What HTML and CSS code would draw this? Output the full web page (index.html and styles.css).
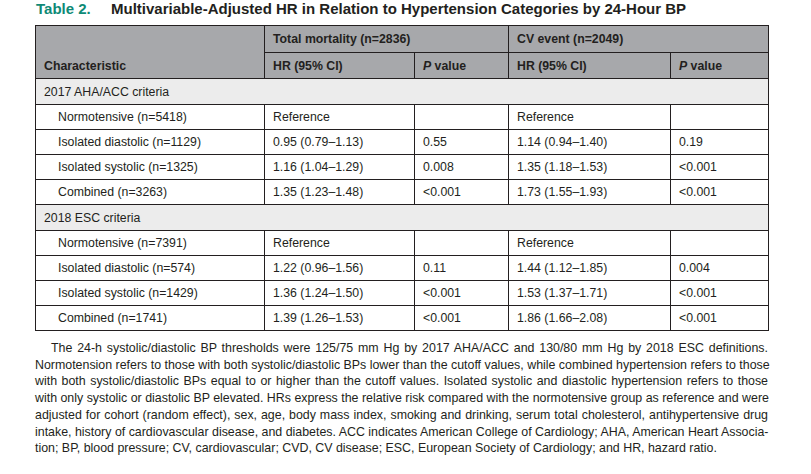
FILE: index.html
```html
<!DOCTYPE html>
<html>
<head>
<meta charset="utf-8">
<link rel="stylesheet" href="styles.css">
</head>
<body>
<div class="page">
  <h1 class="title"><span class="label">Table 2.</span><span class="caption">Multivariable-Adjusted HR in Relation to Hypertension Categories by 24-Hour BP</span></h1>
  <table class="tbl">
    <colgroup>
      <col class="c1"><col class="c2"><col class="c3"><col class="c4"><col class="c5">
    </colgroup>
    <thead>
      <tr class="h1">
        <th rowspan="2" class="char">Characteristic</th>
        <th colspan="2">Total mortality (n=2836)</th>
        <th colspan="2">CV event (n=2049)</th>
      </tr>
      <tr class="h2">
        <th>HR (95% CI)</th>
        <th><i>P</i> value</th>
        <th>HR (95% CI)</th>
        <th><i>P</i> value</th>
      </tr>
    </thead>
    <tbody>
      <tr class="sec"><td colspan="5">2017 AHA/ACC criteria</td></tr>
      <tr><td class="ind">Normotensive (n=5418)</td><td>Reference</td><td></td><td>Reference</td><td></td></tr>
      <tr><td class="ind">Isolated diastolic (n=1129)</td><td>0.95 (0.79–1.13)</td><td>0.55</td><td>1.14 (0.94–1.40)</td><td>0.19</td></tr>
      <tr><td class="ind">Isolated systolic (n=1325)</td><td>1.16 (1.04–1.29)</td><td>0.008</td><td>1.35 (1.18–1.53)</td><td>&lt;0.001</td></tr>
      <tr><td class="ind">Combined (n=3263)</td><td>1.35 (1.23–1.48)</td><td>&lt;0.001</td><td>1.73 (1.55–1.93)</td><td>&lt;0.001</td></tr>
      <tr class="sec"><td colspan="5">2018 ESC criteria</td></tr>
      <tr><td class="ind">Normotensive (n=7391)</td><td>Reference</td><td></td><td>Reference</td><td></td></tr>
      <tr><td class="ind">Isolated diastolic (n=574)</td><td>1.22 (0.96–1.56)</td><td>0.11</td><td>1.44 (1.12–1.85)</td><td>0.004</td></tr>
      <tr><td class="ind">Isolated systolic (n=1429)</td><td>1.36 (1.24–1.50)</td><td>&lt;0.001</td><td>1.53 (1.37–1.71)</td><td>&lt;0.001</td></tr>
      <tr><td class="ind">Combined (n=1741)</td><td>1.39 (1.26–1.53)</td><td>&lt;0.001</td><td>1.86 (1.66–2.08)</td><td>&lt;0.001</td></tr>
    </tbody>
  </table>
  <p class="note">
    <span class="ln first">The 24-h systolic/diastolic BP thresholds were 125/75 mm Hg by 2017 AHA/ACC and 130/80 mm Hg by 2018 ESC definitions.</span>
    <span class="ln">Normotension refers to those with both systolic/diastolic BPs lower than the cutoff values, while combined hypertension refers to those</span>
    <span class="ln">with both systolic/diastolic BPs equal to or higher than the cutoff values. Isolated systolic and diastolic hypertension refers to those</span>
    <span class="ln">with only systolic or diastolic BP elevated. HRs express the relative risk compared with the normotensive group as reference and were</span>
    <span class="ln">adjusted for cohort (random effect), sex, age, body mass index, smoking and drinking, serum total cholesterol, antihypertensive drug</span>
    <span class="ln">intake, history of cardiovascular disease, and diabetes. ACC indicates American College of Cardiology; AHA, American Heart Associa-</span>
    <span class="ln last">tion; BP, blood pressure; CV, cardiovascular; CVD, CV disease; ESC, European Society of Cardiology; and HR, hazard ratio.</span>
  </p>
</div>
</body>
</html>
```
FILE: styles.css
```css
html, body {
  margin: 0;
  padding: 0;
  background: #ffffff;
}
body {
  font-family: "Liberation Sans", Arial, sans-serif;
  color: #231f20;
}
.page {
  width: 733px;
  margin-left: 35px;
}
.title {
  margin: 0;
  height: 25px;
  font-size: 15px;
  font-weight: bold;
  line-height: 17px;
  color: #231f20;
  white-space: nowrap;
}
.title .label {
  color: #0f8a76;
  display: inline-block;
  width: 75px;
  margin-left: 1px;
}
.tbl {
  border-collapse: collapse;
  width: 733px;
  table-layout: fixed;
  font-size: 12.3px;
  border: 1px solid #231f20;
}
.c1 { width: 229px; }
.c2 { width: 150px; }
.c3 { width: 94px; }
.c4 { width: 162px; }
.c5 { width: 98px; }
.tbl th, .tbl td {
  border: 1px solid #231f20;
  padding: 0 8px;
  text-align: left;
  white-space: nowrap;
}
.tbl th {
  background: #a7a8ab;
  font-weight: bold;
}
.h1 th { height: 26px; }
.h2 th { height: 25px; }
.tbl th.char {
  vertical-align: bottom;
  padding-bottom: 5px;
}
.tbl td { height: 24px; }
.tbl tr.sec td {
  background: #ececec;
  height: 25px;
}
.tbl td.ind { padding-left: 22px; }
.note {
  margin: 9px 0 0 0;
  font-size: 12.4px;
  line-height: 16.7px;
  color: #231f20;
}
.note .ln {
  display: block;
  text-align: justify;
  text-align-last: justify;
  white-space: nowrap;
}
.note .ln.first { text-indent: 16px; }
.note .ln.last { text-align-last: left; }
```
